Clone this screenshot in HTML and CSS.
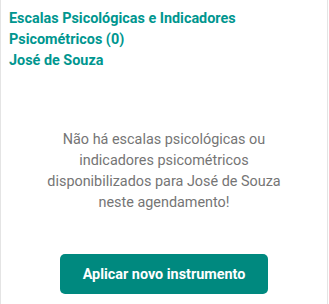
FILE: index.html
```html
<!DOCTYPE html>
<html lang="pt-BR">
<head>
    <meta charset="UTF-8">
    <meta name="viewport" content="width=device-width, initial-scale=1.0">
    <title>Escalas Psicológicas</title>
    <link rel="stylesheet" href="styles.css">
</head>
<body>
    <div class="card">
        <h2 class="card-title">Escalas Psicológicas e Indicadores Psicométricos (0)<br>José de Souza</h2>

        <p class="empty-msg">Não há escalas psicológicas ou indicadores psicométricos disponibilizados para José de Souza neste agendamento!</p>

        <div class="actions">
            <button class="btn-primary">Aplicar novo instrumento</button>
        </div>
    </div>
</body>
</html>
```

FILE: styles.css
```css
* {
    margin: 0;
    padding: 0;
    box-sizing: border-box;
}

body {
    font-family: Roboto, 'Noto Sans', sans-serif;
    background: #fff;
}

.card {
    width: 328px;
    height: 304px;
    border-left: 1px solid #e4e4e4;
    border-right: 1px solid #e4e4e4;
    padding: 8px 8px 0 8px;
}

.card-title {
    font-size: 14.4px;
    font-weight: 700;
    line-height: 21px;
    color: #00968f;
}

.empty-msg {
    margin: 58px auto 0;
    width: 250px;
    text-align: center;
    font-size: 14.4px;
    line-height: 21px;
    color: #757575;
}

.actions {
    display: flex;
    justify-content: center;
    margin-top: 41px;
}

.btn-primary {
    width: 208px;
    height: 40px;
    background: #00897f;
    color: #fff;
    border: none;
    border-radius: 5px;
    font-family: Roboto, 'Noto Sans', sans-serif;
    font-size: 14.4px;
    font-weight: 700;
}
```
